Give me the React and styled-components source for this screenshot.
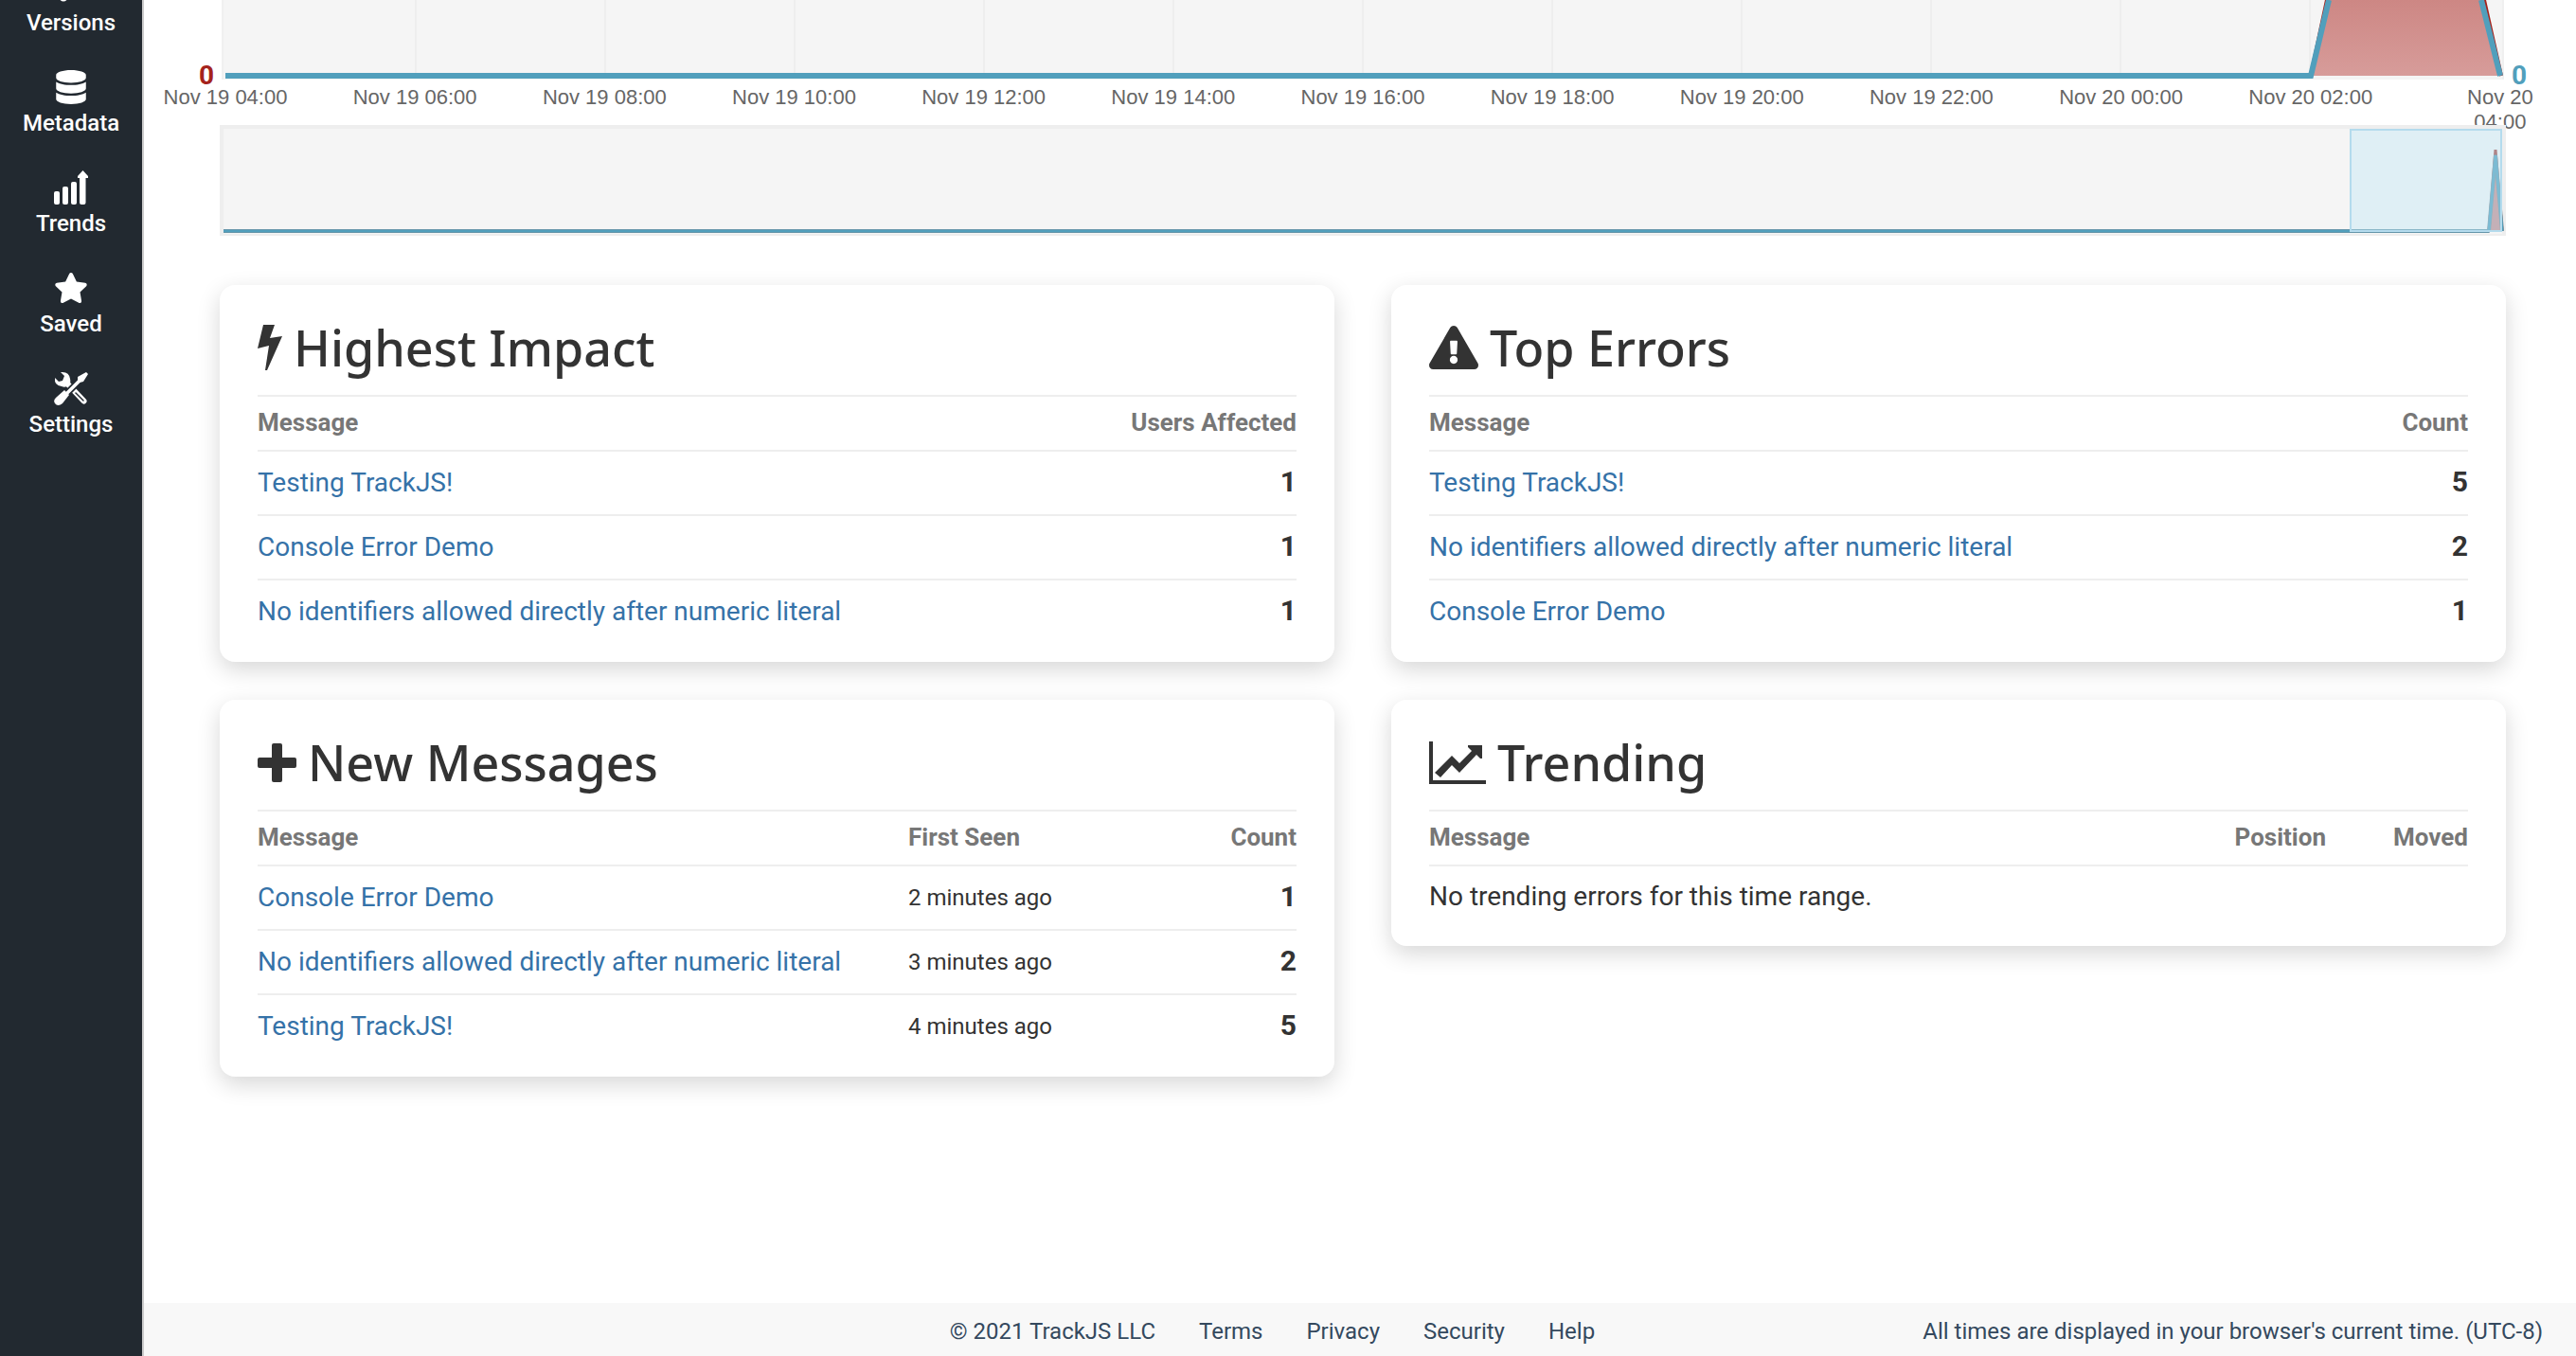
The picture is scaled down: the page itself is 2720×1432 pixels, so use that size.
import React from "react";
import styled, { createGlobalStyle } from "styled-components";
import { FaDatabase, FaStar, FaExclamationTriangle } from "react-icons/fa";

const GlobalStyle = createGlobalStyle`
  *, *::before, *::after { box-sizing: border-box; }
  body {
    margin: 0;
    background: #fff;
    color: #333;
    font-family: Roboto, "Liberation Sans", sans-serif;
    font-size: 28px;
    line-height: 40px;
    overflow: hidden;
  }
  a { text-decoration: none; }
`;

const Shell = styled.div`
  display: flex;
  height: 100vh;
  overflow: hidden;
`;

const Sidebar = styled.nav`
  flex: 0 0 152px;
  display: flex;
  flex-direction: column;
  gap: 34px;
  margin-top: -32px;
  background: #222930;
  border-right: 2px solid #ccc;
`;

const NavItem = styled.a`
  display: flex;
  flex-direction: column;
  align-items: center;
  gap: 4px;
  color: #fff;
  font-size: 24px;
  font-weight: 500;
  line-height: 32px;

  svg { display: block; width: 36px; height: 36px; }
`;

const Main = styled.main`
  flex: 1;
  min-width: 0;
  display: flex;
  flex-direction: column;
`;

const Content = styled.div`
  flex: 1;
  padding: 0 74px 0 80px;
`;

const Plot = styled.svg`
  display: block;
  width: 100%;
  overflow: visible;
`;

const ChartRow = styled.div`
  position: relative;
  margin: 0 2px;
`;

const AxisZero = styled.span`
  position: absolute;
  top: 60px;
  ${(p) => (p.$side === "left" ? "right: calc(100% + 8px);" : "left: calc(100% + 8px);")}
  color: ${(p) => (p.$side === "left" ? "#a5231c" : "#519fbc")};
  font-size: 28px;
  font-weight: 700;
`;

const Ticks = styled.div`
  display: flex;
  justify-content: space-between;
  height: 48px;
  margin: 0 6px;
  color: #666;
  font-family: "Liberation Sans", Arial, sans-serif;
  font-size: 22px;
  line-height: 26px;
  text-align: center;
`;

const Tick = styled.span`
  flex: 0 0 0;
  min-width: 0;
  display: flex;
  justify-content: center;
  padding-top: 6px;
`;

const TickText = styled.span`
  flex: none;
  width: ${(p) => (p.$narrow ? "72px" : "auto")};
  white-space: ${(p) => (p.$narrow ? "normal" : "nowrap")};
`;

const Overview = styled.div`
  position: relative;
  height: 117px;
  border: 4px solid #eee;
  border-bottom-width: 2px;
  background: #f5f5f5;
`;

const Cards = styled.div`
  display: grid;
  grid-template-columns: 1fr 1fr;
  align-items: start;
  gap: 40px 60px;
  padding-top: 52px;
`;

const Card = styled.section`
  padding: 32px 40px 20px;
  border-radius: 16px;
  background: #fff;
  box-shadow: 0 8px 24px rgba(0, 0, 0, 0.16);
`;

const CardTitle = styled.h2`
  display: flex;
  align-items: center;
  gap: 12px;
  margin: 0;
  height: 84px;
  padding-bottom: 16px;
  font-family: "Noto Sans", sans-serif;
  font-size: 52px;
  font-weight: 500;
  line-height: 68px;

  svg { display: block; flex: none; }
`;

const Table = styled.table`
  width: 100%;
  border-collapse: separate;
  border-spacing: 0;
`;

const HeadCell = styled.th`
  width: ${(p) => p.$width || "auto"};
  height: 58px;
  padding: 0 0 2px;
  border-top: 2px solid #eee;
  color: #777;
  font-size: 26px;
  font-weight: 700;
  text-align: ${(p) => (p.$right ? "right" : "left")};
`;

const Cell = styled.td`
  height: 68px;
  padding: 0;
  border-top: 2px solid #eee;
  font-size: ${(p) => (p.$small ? "24px" : "28px")};
  text-align: left;
`;

const CountCell = styled(Cell)`
  padding-bottom: 2px;
  font-size: 30px;
  font-weight: 700;
  text-align: right;
`;

const EmptyCell = styled(Cell)`
  height: 66px;
`;

const MessageLink = styled.a`
  color: #3572a8;
`;

const Footer = styled.footer`
  display: grid;
  grid-template-columns: 17fr auto 20fr;
  align-items: center;
  height: 56px;
  padding: 4px 35px 0 0;
  background: #f8f8f8;
  color: #34495e;
  font-size: 24px;
  line-height: 32px;
`;

const FooterLinks = styled.div`
  grid-column: 2;
  display: flex;
  gap: 46px;
`;

const FooterLink = styled.a`
  color: inherit;
`;

const TimeNote = styled.span`
  justify-self: end;
`;

const BranchIcon = () => (
  <svg viewBox="0 0 36 36" fill="none" stroke="#fff" strokeWidth="3" aria-hidden="true">
    <circle cx="10" cy="5" r="3" />
    <circle cx="10" cy="29" r="3" />
    <circle cx="26" cy="9" r="3" />
    <path d="M10 8 V26 M26 12 Q26 19 18 19 Q10 20 10 24" />
  </svg>
);

const TrendsIcon = () => (
  <svg viewBox="0 0 36 36" fill="#fff" aria-hidden="true">
    <rect x="0" y="22" width="6" height="14" rx="2" />
    <rect x="9" y="17" width="6" height="19" rx="2" />
    <rect x="18" y="12" width="6" height="24" rx="2" />
    <path d="M30.500 0 L36 6 V8 H33.500 V34 Q33.500 36 31.500 36 H29 Q27 36 27 34 V8 H25 V6 Z" />
  </svg>
);

const ToolsIcon = () => (
  <svg viewBox="0 0 36 36" fill="none" aria-hidden="true">
    <path d="M14 13 L31.500 31.500" stroke="#fff" strokeWidth="6" strokeLinecap="round" />
    <path d="M23 23 L31 31" stroke="#222930" strokeWidth="1.500" strokeLinecap="round" />
    <path d="M7 1 Q16 0 17 8 Q18 12 16 14 Q13 18 8 16 Q0 15 1 7 L5 11 L9 10 L11 5 Z" fill="#fff" />
    <path d="M12 25 L27 10" stroke="#222930" strokeWidth="7" />
    <path d="M12 25 L28 9" stroke="#fff" strokeWidth="3.500" />
    <path d="M25 11 L25 6 L34 1 L36 3 L31 11 L27 12 Z" fill="#fff" />
    <path d="M11 20 L16 25 L9 34 Q4 38 1 34 Q-1 31 2 28 Z" fill="#fff" />
  </svg>
);

const BoltIcon = () => (
  <svg width="26" height="48" viewBox="0 0 26 48" fill="#333" aria-hidden="true">
    <path d="M6 0 H18 L13 14 L26 12 L10 48 H8 L12 22 L0 25 Z" />
  </svg>
);

const PlusIcon = () => (
  <svg width="41" height="41" viewBox="0 0 41 41" fill="#333" aria-hidden="true">
    <rect x="15" y="0" width="11" height="41" rx="2" />
    <rect x="0" y="15" width="41" height="11" rx="2" />
  </svg>
);

const LineChartIcon = () => (
  <svg width="60" height="45" viewBox="0 0 60 45" fill="#333" aria-hidden="true">
    <path d="M0 0 H4 V41 H60 V45 H0 Z" />
    <path d="M6 33 L24 15 L32 23 L45 10 L41 6 V4 H56 V18 H54 L50 14 L32 33 L24 25 L12 38 Z" />
  </svg>
);

const tickLabels = [
  "Nov 19 04:00", "Nov 19 06:00", "Nov 19 08:00", "Nov 19 10:00", "Nov 19 12:00",
  "Nov 19 14:00", "Nov 19 16:00", "Nov 19 18:00", "Nov 19 20:00", "Nov 19 22:00",
  "Nov 20 00:00", "Nov 20 02:00", "Nov 20 04:00",
];

function MainChart() {
  return (
    <ChartRow>
      <Plot viewBox="0 0 2410 84" role="img" aria-label="Errors over time">
        <defs>
          <linearGradient id="errors" x1="0" y1="0" x2="0" y2="1">
            <stop offset="0" stopColor="#cd8784" />
            <stop offset="1" stopColor="#d79c9a" />
          </linearGradient>
        </defs>
        <rect width="2410" height="84" fill="#f5f5f5" />
        <path d="M1 0 V84 M2409 0 V84" stroke="#f0f0f0" strokeWidth="2" />
        {tickLabels.slice(1, -1).map((label, i) => (
          <path key={label} d={`M${205 + i * 200} 0 V78`} stroke="#eee" strokeWidth="2" />
        ))}
        <path d="M2207 80 L2225 0 H2386 L2406 80 Z" fill="url(#errors)" />
        <path d="M2206 80 L2223 0 M2389 0 L2407 80" stroke="#a5231c" strokeWidth="4" fill="none" />
        <path d="M4 80 H2206 L2225 0 M2386 0 L2406 80" stroke="#519fbc" strokeWidth="6" fill="none" />
      </Plot>
      <AxisZero $side="left">0</AxisZero>
      <AxisZero $side="right">0</AxisZero>
    </ChartRow>
  );
}

function OverviewChart() {
  return (
    <Overview>
      <Plot viewBox="0 0 2406 111" role="img" aria-label="Selected time range">
        <path d="M0 108 H2392 L2399 22 L2406 108" fill="#c98d8e" stroke="#a5433f" strokeWidth="3" strokeLinejoin="bevel" />
        <path d="M0 108 H2392 L2399 28 L2406 108" fill="none" stroke="#7c8d98" strokeWidth="4" strokeLinejoin="bevel" />
        <path d="M0 108 H2392 L2399 28 L2406 108" fill="none" stroke="#519fbc" strokeWidth="3" strokeLinejoin="bevel" />
        <rect x="2246" y="1" width="159" height="107" fill="#bfe5f5" fillOpacity="0.4" stroke="#b4dbed" strokeWidth="2" />
      </Plot>
    </Overview>
  );
}

const impact = [["Testing TrackJS!", 1], ["Console Error Demo", 1], ["No identifiers allowed directly after numeric literal", 1]];
const top = [["Testing TrackJS!", 5], ["No identifiers allowed directly after numeric literal", 2], ["Console Error Demo", 1]];
const recent = [["Console Error Demo", 1, "2 minutes ago"], ["No identifiers allowed directly after numeric literal", 2, "3 minutes ago"], ["Testing TrackJS!", 5, "4 minutes ago"]];

function ErrorTable({ countLabel, rows, seen }) {
  return (
    <Table>
      <thead>
        <tr>
          <HeadCell>Message</HeadCell>
          {seen && <HeadCell $width="280px">First Seen</HeadCell>}
          <HeadCell $right $width={seen ? "130px" : "240px"}>{countLabel}</HeadCell>
        </tr>
      </thead>
      <tbody>
        {rows.map(([message, count, time]) => (
          <tr key={message}>
            <Cell><MessageLink href="#">{message}</MessageLink></Cell>
            {seen && <Cell $small>{time}</Cell>}
            <CountCell>{count}</CountCell>
          </tr>
        ))}
      </tbody>
    </Table>
  );
}

export default function App() {
  return (
    <Shell>
      <GlobalStyle />
      <Sidebar>
        <NavItem href="#"><BranchIcon />Versions</NavItem>
        <NavItem href="#"><FaDatabase />Metadata</NavItem>
        <NavItem href="#"><TrendsIcon />Trends</NavItem>
        <NavItem href="#"><FaStar />Saved</NavItem>
        <NavItem href="#"><ToolsIcon />Settings</NavItem>
      </Sidebar>
      <Main>
        <Content>
          <MainChart />
          <Ticks>
            {tickLabels.map((label, i) => (
              <Tick key={label}><TickText $narrow={i === 12}>{label}</TickText></Tick>
            ))}
          </Ticks>
          <OverviewChart />
          <Cards>
            <Card>
              <CardTitle><BoltIcon />Highest Impact</CardTitle>
              <ErrorTable countLabel="Users Affected" rows={impact} />
            </Card>
            <Card>
              <CardTitle><FaExclamationTriangle />Top Errors</CardTitle>
              <ErrorTable countLabel="Count" rows={top} />
            </Card>
            <Card>
              <CardTitle><PlusIcon />New Messages</CardTitle>
              <ErrorTable countLabel="Count" rows={recent} seen />
            </Card>
            <Card>
              <CardTitle><LineChartIcon />Trending</CardTitle>
              <Table>
                <thead>
                  <tr>
                    <HeadCell>Message</HeadCell>
                    <HeadCell $right $width="150px">Position</HeadCell>
                    <HeadCell $right $width="150px">Moved</HeadCell>
                  </tr>
                </thead>
                <tbody>
                  <tr><EmptyCell colSpan={3}>No trending errors for this time range.</EmptyCell></tr>
                </tbody>
              </Table>
            </Card>
          </Cards>
        </Content>
        <Footer>
          <FooterLinks>
            <span>© 2021 TrackJS LLC</span>
            <FooterLink href="#">Terms</FooterLink>
            <FooterLink href="#">Privacy</FooterLink>
            <FooterLink href="#">Security</FooterLink>
            <FooterLink href="#">Help</FooterLink>
          </FooterLinks>
          <TimeNote>All times are displayed in your browser's current time. (UTC-8)</TimeNote>
        </Footer>
      </Main>
    </Shell>
  );
}
